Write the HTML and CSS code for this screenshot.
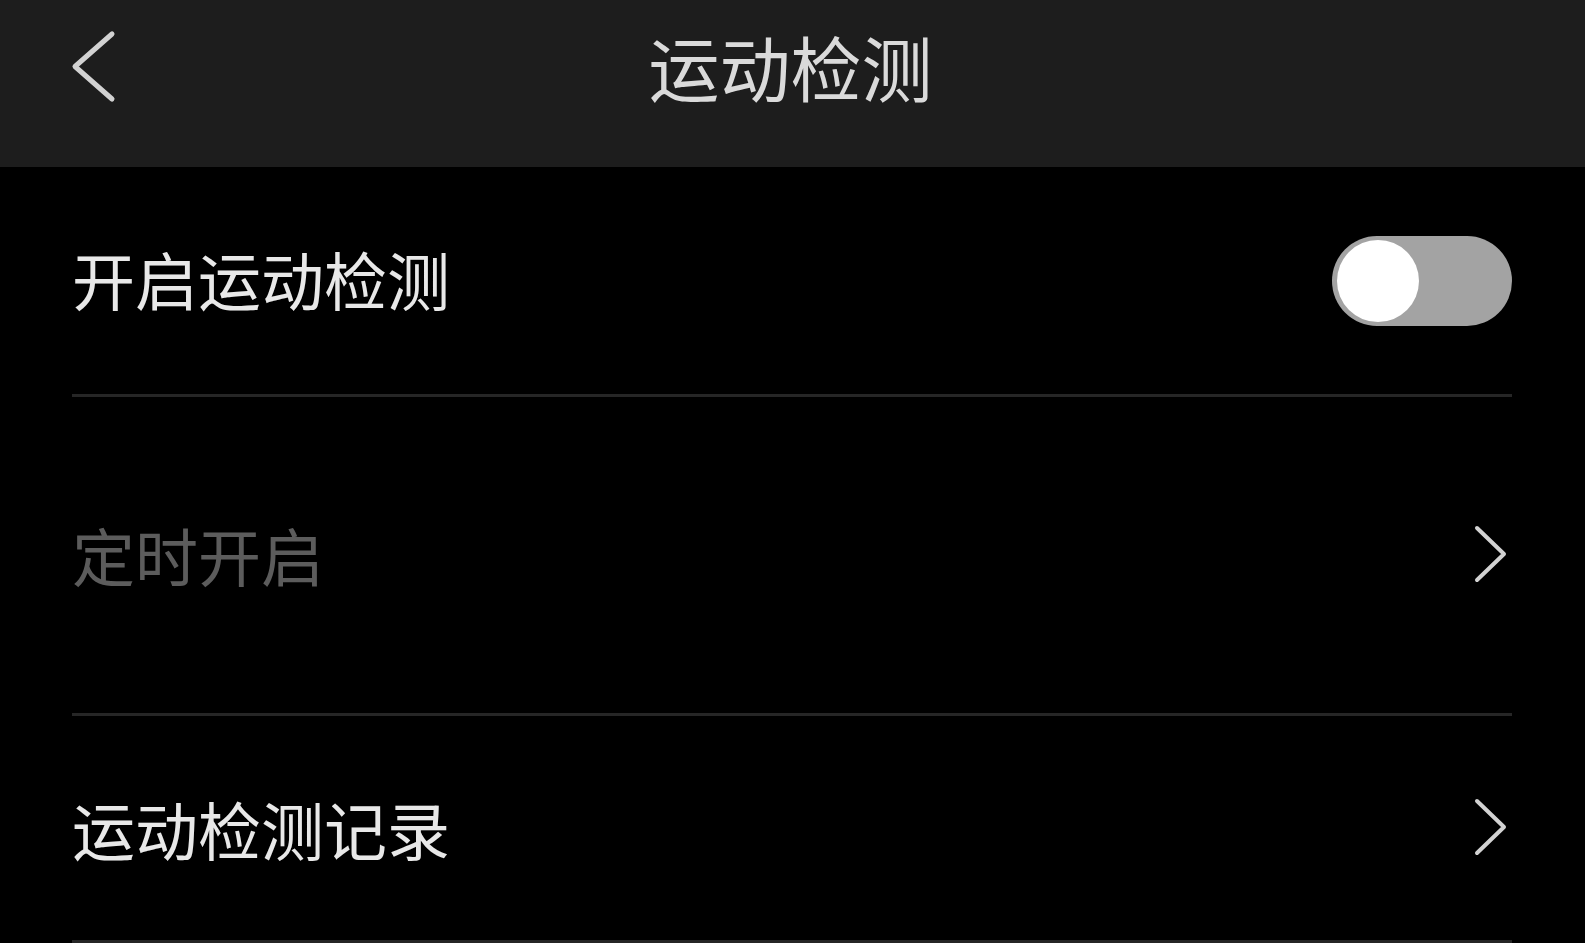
FILE: index.html
```html
<!DOCTYPE html>
<html lang="zh-CN">
<head>
<meta charset="utf-8">
<title>运动检测</title>
<link rel="stylesheet" href="styles.css">
</head>
<body>
<div class="app">
  <header class="topbar">
    <div class="back">
      <svg width="50" height="75" viewBox="0 0 50 75">
        <path d="M42 5 L5 37.5 L42 70" fill="none" stroke="#d2d2d2" stroke-width="5" stroke-linecap="round" stroke-linejoin="round"/>
      </svg>
    </div>
    <h1 class="title">运动检测</h1>
    <div class="spacer"></div>
  </header>
  <main class="list">
    <div class="row row-switch">
      <span class="label">开启运动检测</span>
      <div class="switch"><div class="knob"></div></div>
    </div>
    <div class="row row-timer">
      <span class="label disabled">定时开启</span>
      <svg class="chev" width="36" height="60" viewBox="0 0 36 60">
        <path d="M4 3 L31 29 L4 55" fill="none" stroke="#d2d2d2" stroke-width="4" stroke-linecap="round" stroke-linejoin="round"/>
      </svg>
    </div>
    <div class="row row-log">
      <span class="label">运动检测记录</span>
      <svg class="chev" width="36" height="60" viewBox="0 0 36 60">
        <path d="M4 3 L31 29 L4 55" fill="none" stroke="#d2d2d2" stroke-width="4" stroke-linecap="round" stroke-linejoin="round"/>
      </svg>
    </div>
  </main>
</div>
</body>
</html>
```

FILE: styles.css
```css
* { box-sizing: border-box; }
html, body {
  margin: 0;
  padding: 0;
  background: #000;
  font-family: "Noto Sans CJK SC", "Noto Sans", sans-serif;
  overflow: hidden;
}
.app {
  width: 1585px;
  height: 943px;
  display: flex;
  flex-direction: column;
}
.topbar {
  height: 167px;
  background: #1d1d1d;
  display: flex;
  align-items: center;
  padding: 0 70px;
  flex-shrink: 0;
}
.back, .spacer {
  width: 50px;
  height: 75px;
  display: flex;
  margin-top: -34px;
}
.title {
  flex: 1;
  margin: 0;
  text-align: center;
  font-size: 71px;
  font-weight: 400;
  line-height: 1;
  color: #dadada;
  margin-top: -36px;
  padding-right: 4px;
}
.list {
  padding: 0 73px 0 72px;
  display: flex;
  flex-direction: column;
}
.row {
  display: flex;
  align-items: center;
  justify-content: space-between;
  border-bottom: 3px solid #262626;
}
.row-switch { height: 230px; }
.row-timer { height: 319px; }
.row-log { height: 227px; }
.label {
  font-size: 63px;
  line-height: 1;
  color: #e8e8e8;
}
.row-switch .label { margin-top: -6px; }
.row-timer .label { margin-top: -4px; }
.row-log .label { margin-top: -2px; }
.label.disabled { color: #5c5c5c; }
.switch {
  width: 180px;
  height: 90px;
  border-radius: 45px;
  background: #a3a3a3;
  padding: 4px 5px;
  display: flex;
  align-items: center;
}
.knob {
  width: 82px;
  height: 82px;
  border-radius: 50%;
  background: #fff;
}
.chev {
  display: block;
  margin-right: 3px;
}
```
